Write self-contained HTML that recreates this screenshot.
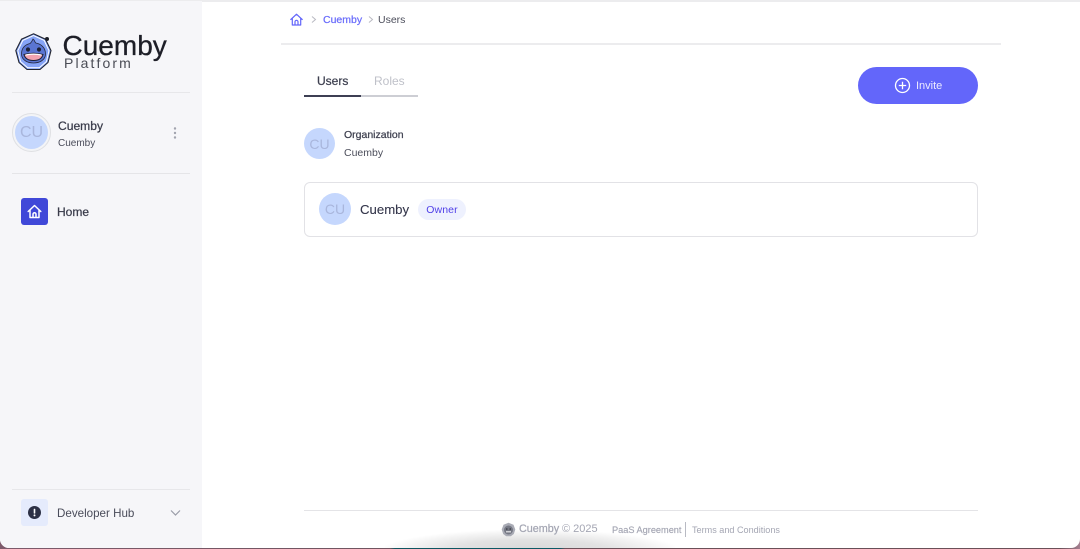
<!DOCTYPE html>
<html lang="en">
<head>
<meta charset="utf-8">
<title>Cuemby Platform</title>
<style>
*{box-sizing:border-box;margin:0;padding:0}
html,body{width:1080px;height:549px;overflow:hidden;background:linear-gradient(90deg,#7d5a6b 0,#6f5560 390px,#0f5560 395px,#0c5a66 560px,#6b5058 565px,#6b5058 1060px,#a57f90 1080px);font-family:"Liberation Sans",sans-serif}
.abs{position:absolute;white-space:nowrap}
.med{-webkit-text-stroke:.25px currentColor}
#app{position:absolute;left:0;top:0;width:1080px;height:548px;background:#fff;border-radius:0 0 9px 9px;overflow:hidden}
#top{position:absolute;left:0;top:0;width:1080px;height:2px;background:#ececee}
#side{position:absolute;left:0;top:1px;width:202px;height:547px;background:#f6f6f9}
.hr{position:absolute;height:1px;background:#e7e7ea}
.av{position:absolute;border-radius:50%;background:#c5d7fd;color:#a9b6dc;display:flex;align-items:center;justify-content:center}
#shadow{position:absolute;left:385px;top:530px;width:290px;height:44px;background:radial-gradient(ellipse at center,#d6d6d6 0,#e2e2e2 40%,#f4f4f4 62%,rgba(255,255,255,0) 74%)}
</style>
</head>
<body>
<div id="app">
<div id="shadow"></div>
<div id="top"></div>
<div id="side"></div>

<svg class="abs" style="left:14px;top:32px" width="40" height="40" viewBox="0 0 40 40">
<polygon points="19.5,1.8 31.5,7.2 37,18.5 34,30.5 26,37.5 13,37.5 5,30.5 1.8,18.5 7.5,7.2" fill="#7b9cf5" stroke="#23252e" stroke-width="1.1"/>
<polygon points="19.5,3.6 30.2,8.4 35,18.7 32.4,29.6 25.3,35.8 13.7,35.8 6.6,29.6 3.8,18.7 8.8,8.4" fill="#86a4f7" stroke="#fff" stroke-width="1"/>
<circle cx="33" cy="7" r="2" fill="#1d1f28"/>
<path d="M7.5 22C7.5 15 12 12.5 16 11.5C17.5 10.500 18 9 19 7C20.500 7.500 20.500 10 21.800 11C27 12 31.500 15.500 31.500 22C31.500 28 25.500 31 19.500 31C13.500 31 7.500 28 7.500 22Z" fill="#5a75d2" stroke="#24283f" stroke-width=".8"/>
<circle cx="14" cy="17.500" r="2.100" fill="#1d2135"/><circle cx="25" cy="17.500" r="2.100" fill="#1d2135"/>
<path d="M10 22.500Q19.500 20 29 22.500Q27.500 28.500 19.500 28.500Q11.500 28.500 10 22.500Z" fill="#f2a3b0" stroke="#1d2135" stroke-width="1"/>
<path d="M11.500 23Q19.500 21.300 27.500 23" fill="none" stroke="#fff" stroke-width="1.200"/>
</svg>
<div class="abs" style="left:62.500px;top:29px;font-size:28px;line-height:34px;color:#1d1e27;-webkit-text-stroke:.3px #1d1e27">Cuemby</div>
<div class="abs" style="left:64px;top:55px;font-size:14px;line-height:16px;color:#4a4c55;letter-spacing:2.100px">Platform</div>
<div class="hr" style="left:12px;top:92px;width:178px"></div>

<div class="abs" style="left:12px;top:113px;width:39px;height:39px;border-radius:50%;background:#f3f4f7;border:1.500px solid #dfe0e3"></div>
<div class="av" style="left:15px;top:116px;width:33px;height:33px;font-size:16px;padding-top:1px">CU</div>
<div class="abs med" style="left:58px;top:119px;font-size:12.100px;line-height:15px;color:#3a3c4b">Cuemby</div>
<div class="abs" style="left:58px;top:137px;font-size:10px;line-height:13px;color:#4a4c5a">Cuemby</div>
<svg class="abs" style="left:172px;top:126px" width="6" height="14" viewBox="0 0 6 14"><g fill="#a2a4af"><circle cx="3" cy="2.500" r="1.200"/><circle cx="3" cy="7" r="1.200"/><circle cx="3" cy="11.500" r="1.200"/></g></svg>
<div class="hr" style="left:12px;top:173px;width:178px;background:#e5e5e8"></div>

<div class="abs" style="left:21px;top:198px;width:27px;height:27px;border-radius:3px;background:#4048d8"></div>
<svg class="abs" style="left:27px;top:204px" width="15" height="15" viewBox="0 0 15 15"><path d="M1.200 7.500L7.500 1.500L13.800 7.500M3 6.200V13.500H12V6.200M6 13.500V10.200A1.500 1.500 0 0 1 9 10.200V13.500" fill="none" stroke="#fff" stroke-width="1.500" stroke-linejoin="round" stroke-linecap="round"/></svg>
<div class="abs med" style="left:57px;top:205px;font-size:12px;line-height:15px;color:#3a3c4b">Home</div>

<div class="hr" style="left:12px;top:489px;width:178px"></div>
<div class="abs" style="left:21px;top:499px;width:27px;height:27px;border-radius:3px;background:#e5ebfc"></div>
<svg class="abs" style="left:28px;top:506px" width="13" height="13" viewBox="0 0 13 13"><circle cx="6.500" cy="6.500" r="6.500" fill="#2c3045"/><rect x="5.700" y="2.800" width="1.600" height="4.800" rx=".6" fill="#fff"/><circle cx="6.500" cy="9.400" r="1" fill="#fff"/></svg>
<div class="abs" style="left:57px;top:506px;font-size:11.600px;line-height:15px;color:#4a4c5a">Developer Hub</div>
<svg class="abs" style="left:170px;top:509px" width="11" height="8" viewBox="0 0 11 8"><path d="M1 1.500L5.500 6L10 1.500" fill="none" stroke="#9a9ca8" stroke-width="1.200"/></svg>

<svg class="abs" style="left:290px;top:13px" width="13" height="13" viewBox="0 0 13 13"><path d="M.8 6.500L6.500 1.200L12.200 6.500M2.300 5.300V12H10.700V5.300M5 12V8.800A1.500 1.500 0 0 1 8 8.800V12" fill="none" stroke="#6366fa" stroke-width="1.200" stroke-linejoin="round" stroke-linecap="round"/></svg>
<svg class="abs" style="left:311px;top:16px" width="6" height="7" viewBox="0 0 6 7"><path d="M1 .5L4.500 3.500L1 6.500" fill="none" stroke="#b8b9c2" stroke-width="1"/></svg>
<div class="abs med" style="left:323px;top:14px;font-size:10.500px;line-height:13px;color:#6b6efb">Cuemby</div>
<svg class="abs" style="left:368px;top:16px" width="6" height="7" viewBox="0 0 6 7"><path d="M1 .5L4.500 3.500L1 6.500" fill="none" stroke="#b8b9c2" stroke-width="1"/></svg>
<div class="abs" style="left:378px;top:14px;font-size:10.500px;line-height:13px;color:#4c4e5b">Users</div>
<div class="hr" style="left:281px;top:43px;width:720px;height:2px;background:#ececee"></div>

<div class="abs med" style="left:317px;top:74px;font-size:12px;line-height:14px;color:#3e4050">Users</div>
<div class="abs" style="left:374px;top:74px;font-size:12px;line-height:14px;color:#bfc1c9">Roles</div>
<div class="abs" style="left:304px;top:95px;width:57px;height:2px;background:#3d3f53"></div>
<div class="abs" style="left:361px;top:95px;width:57px;height:2px;background:#cdced4"></div>

<div class="abs" style="left:858px;top:67px;width:120px;height:37px;border-radius:19px;background:#6366fa"></div>
<svg class="abs" style="left:894px;top:77px" width="17" height="17" viewBox="0 0 17 17"><circle cx="8.500" cy="8.500" r="7" fill="none" stroke="#fff" stroke-width="1.300"/><path d="M8.500 4.800V12.200M4.800 8.500H12.200" stroke="#fff" stroke-width="1.300"/></svg>
<div class="abs" style="left:916px;top:80px;font-size:11px;line-height:13px;color:#eceaff">Invite</div>

<div class="av" style="left:304px;top:128px;width:31px;height:31px;font-size:14px">CU</div>
<div class="abs med" style="left:344px;top:129px;font-size:10.500px;line-height:13px;color:#3f4150">Organization</div>
<div class="abs" style="left:344px;top:147px;font-size:10.500px;line-height:13px;color:#4c4e5b">Cuemby</div>

<div class="abs" style="left:304px;top:182px;width:674px;height:55px;border:1px solid #e2e2e6;border-radius:6px;background:#fff"></div>
<div class="av" style="left:319px;top:193px;width:32px;height:32px;font-size:14px">CU</div>
<div class="abs" style="left:360px;top:201px;font-size:13.200px;line-height:17px;color:#33354a;-webkit-text-stroke:.1px #33354a">Cuemby</div>
<div class="abs" style="left:418px;top:199px;width:48px;height:21px;border-radius:11px;background:#eef1fe;color:#4f3fe8;font-size:10.500px;line-height:22px;text-align:center;letter-spacing:.1px">Owner</div>

<div class="hr" style="left:304px;top:510px;width:674px;background:#e4e4e7"></div>
<svg class="abs" style="left:501px;top:522px" width="15" height="15" viewBox="0 0 15 15"><polygon points="7.500,.7 12.500,2.800 14.300,7.500 12.800,12 9.800,14.300 5.200,14.300 2.200,12 .7,7.500 2.500,2.800" fill="#a9abb5"/><circle cx="7.500" cy="8" r="4.500" fill="#757884"/><circle cx="5.800" cy="7" r=".8" fill="#33353d"/><circle cx="9.200" cy="7" r=".8" fill="#33353d"/><rect x="5" y="9" width="5" height="1.500" fill="#cfd0d5"/></svg>
<div class="abs med" style="left:519px;top:523px;font-size:10.800px;line-height:13px;color:#a4a6b3">Cuemby</div>
<div class="abs" style="left:562px;top:523px;font-size:11px;line-height:13px;color:#a4a6b3">© 2025</div>
<div class="abs med" style="left:612px;top:524px;font-size:9.200px;line-height:12px;color:#a4a6b3;-webkit-text-stroke-width:.15px">PaaS Agreement</div>
<div class="abs" style="left:685px;top:522px;width:1px;height:15px;background:#b8bac3"></div>
<div class="abs" style="left:692px;top:524px;font-size:9.100px;line-height:12px;color:#a4a6b3">Terms and Conditions</div>
</div>
</body>
</html>
